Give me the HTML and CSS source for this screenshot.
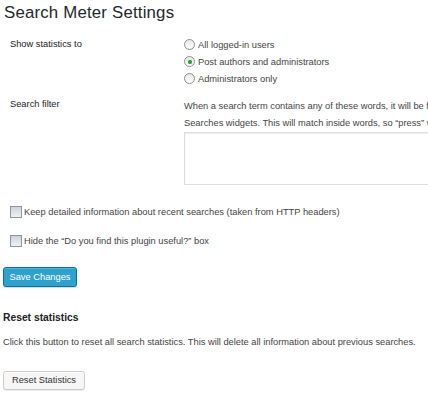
FILE: index.html
```html
<!DOCTYPE html>
<html>
<head>
<meta charset="utf-8">
<link rel="stylesheet" href="styles.css">
</head>
<body>
<div class="wrap">
  <h1 class="title">Search Meter Settings</h1>
  <div class="form">
    <div class="row row-stats">
      <div class="label">Show statistics to</div>
      <div class="field">
        <div class="opt"><span class="radio"></span><span>All logged-in users</span></div>
        <div class="opt"><span class="radio checked"></span><span>Post authors and administrators</span></div>
        <div class="opt"><span class="radio"></span><span>Administrators only</span></div>
      </div>
    </div>
    <div class="row row-filter">
      <div class="label label-filter">Search filter</div>
      <div class="field">
        <p class="desc"><span class="desc-line">When a search term contains any of these words, it will be filtered and will not show up in the Recent Searches and Popular</span><span class="desc-line">Searches widgets. This will match inside words, so “press” will also match “WordPress”.</span></p>
        <div class="textarea"></div>
      </div>
    </div>
  </div>
  <div class="check-row check-first"><span class="checkbox"></span><span>Keep detailed information about recent searches (taken from HTTP headers)</span></div>
  <div class="check-row check-second"><span class="checkbox"></span><span>Hide the “Do you find this plugin useful?” box</span></div>
  <div class="btn-primary">Save Changes</div>
  <h3 class="subtitle">Reset statistics</h3>
  <p class="reset-desc">Click this button to reset all search statistics. This will delete all information about previous searches.</p>
  <div class="btn-secondary">Reset Statistics</div>
</div>
</body>
</html>
```
FILE: styles.css
```css
html, body {
  margin: 0;
  padding: 0;
  background: #ffffff;
  width: 428px;
  height: 396px;
  overflow: hidden;
}
body {
  font-family: "Liberation Sans", "Noto Sans CJK JP", sans-serif;
  font-size: 9.3px;
  color: #444444;
}
.wrap {
  padding: 0 0 0 3px;
  width: 425px;
}
.title {
  margin: 0;
  padding: 0 0 0 1px;
  font-size: 16.8px;
  font-weight: normal;
  color: #23282d;
  height: 24px;
  line-height: 25px;
  letter-spacing: 0.2px;
}
.form {
  display: flex;
  flex-direction: column;
}
.row {
  display: flex;
}
.label {
  width: 174px;
  padding-left: 7px;
  color: #222222;
  flex: none;
}
.row-stats {
  margin-top: 12px;
}
.row-stats .label {
  line-height: 17px;
}
.opt {
  display: flex;
  align-items: center;
  height: 17px;
  gap: 3px;
}
.radio {
  width: 9px;
  height: 9px;
  border: 1px solid #8f8f8f;
  border-radius: 50%;
  background: linear-gradient(#e8e8e8, #ffffff);
  display: inline-flex;
  align-items: center;
  justify-content: center;
  flex: none;
}
.radio.checked::after {
  content: "";
  width: 4px;
  height: 4px;
  border-radius: 50%;
  background: #2e9a3a;
  box-shadow: 0 0 1px #6fc46f;
}
.row-filter {
  margin-top: 11px;
}
.label-filter {
  line-height: 17px;
  margin-top: -2px;
}
.field {
  flex: none;
}
.desc {
  margin: 0;
  line-height: 17px;
  height: 34px;
  width: 244px;
  overflow: visible;
}
.desc-line {
  display: block;
  white-space: nowrap;
}
.textarea {
  width: 300px;
  height: 51px;
  border: 1px solid #dddddd;
  box-shadow: inset 0 1px 2px rgba(0,0,0,0.07);
  background: #ffffff;
}
.check-row {
  display: flex;
  align-items: center;
  gap: 2px;
  padding-left: 7px;
  height: 14px;
}
.check-first {
  margin-top: 20px;
}
.check-second {
  margin-top: 15px;
}
.checkbox {
  width: 10px;
  height: 10px;
  border: 1px solid #8898ac;
  background: linear-gradient(#cfd3da, #eef0f3);
  flex: none;
}
.btn-primary {
  margin-top: 19px;
  width: 72px;
  height: 18px;
  line-height: 18px;
  text-align: center;
  color: #ffffff;
  background: #2ea2cc;
  border: 1px solid #0074a2;
  border-radius: 3px;
  box-shadow: inset 0 1px 0 rgba(120,200,230,0.5), 0 1px 0 rgba(0,0,0,0.15);
}
.subtitle {
  margin: 24px 0 0 0;
  font-size: 10.3px;
  font-weight: bold;
  color: #222222;
  line-height: 14px;
}
.reset-desc {
  margin: 10px 0 0 0;
  line-height: 14px;
}
.btn-secondary {
  margin-top: 22px;
  width: 80px;
  height: 17px;
  line-height: 17px;
  text-align: center;
  color: #333333;
  background: #f7f7f7;
  border: 1px solid #cccccc;
  border-radius: 3px;
  box-shadow: inset 0 1px 0 #ffffff, 0 1px 0 rgba(0,0,0,0.08);
}
```
